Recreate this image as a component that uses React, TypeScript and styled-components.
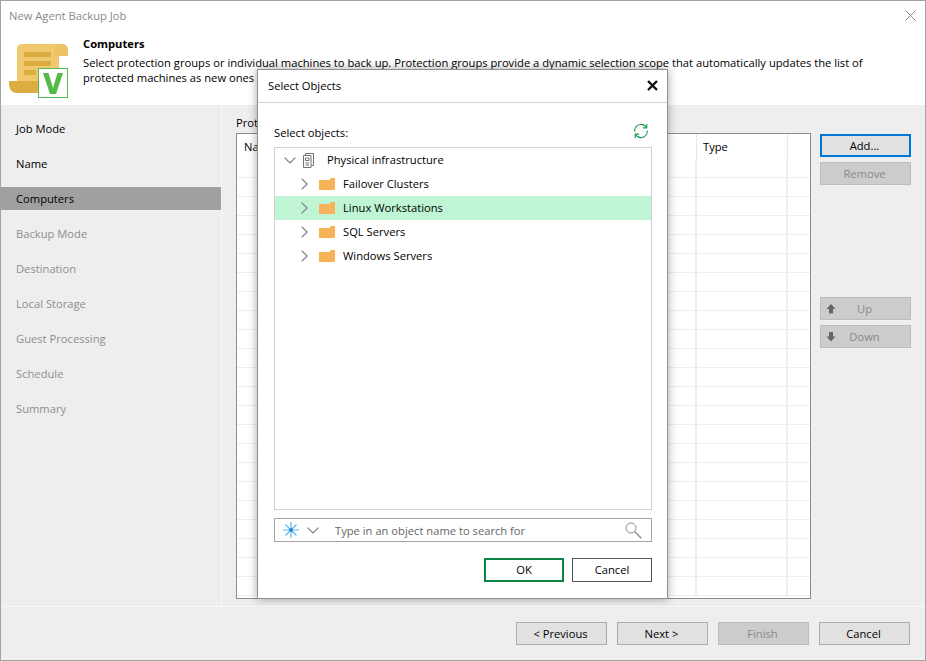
import styled, { createGlobalStyle } from 'styled-components';

const Global = createGlobalStyle`
  html, body { margin: 0; padding: 0; background: #fff; }
  body {
    font-family: "Open Sans", "Noto Sans", "Liberation Sans", sans-serif;
    font-size: 11.2px;
    color: #000;
  }
`;

const Wizard = styled.div`
  position: relative;
  box-sizing: border-box;
  width: 926px;
  height: 661px;
  border: 1px solid #a3a3a3;
  display: flex;
  flex-direction: column;
  overflow: hidden;
`;

const TitleBar = styled.div`
  height: 30px;
  flex: none;
  box-sizing: border-box;
  display: flex;
  align-items: center;
  justify-content: space-between;
  padding: 0 9px 2px 8px;
  color: #8a8a8a;
  background: #fff;
`;

const Header = styled.div`
  height: 74px;
  flex: none;
  display: flex;
  background: #fff;
  padding-left: 7px;
`;

const Logo = styled.svg`
  width: 61px;
  height: 56px;
  margin-top: 12px;
  flex: none;
`;

const HeaderText = styled.div`
  margin-left: 14px;
  padding-top: 5px;
  width: 800px;
  line-height: 15px;
`;

const HeaderTitle = styled.div`
  font-weight: 700;
  margin-bottom: 4px;
`;

const Body = styled.div`
  flex: 1;
  display: flex;
  min-height: 0;
`;

const Sidebar = styled.nav`
  width: 220px;
  flex: none;
  background: #eee;
  border-right: 1px solid #f7f7f7;
  display: flex;
  flex-direction: column;
  gap: 12px;
  padding-top: 12px;
`;

const Step = styled.div<{ $active?: boolean; $muted?: boolean }>`
  height: 23px;
  line-height: 23px;
  padding-left: 15px;
  background: ${({ $active }) => ($active ? '#a0a0a0' : 'transparent')};
  color: ${({ $muted }) => ($muted ? '#8f8f8f' : '#000')};
`;

const Main = styled.div`
  flex: 1;
  background: #eee;
  display: flex;
  padding: 10px 15px 7px 14px;
  gap: 9px;
  min-width: 0;
`;

const ListColumn = styled.div`
  width: 575px;
  flex: none;
  display: flex;
  flex-direction: column;
`;

const ListLabel = styled.div`
  height: 18px;
  line-height: 15px;
`;

const Table = styled.div`
  flex: 1;
  background: #fff;
  border: 1px solid #8c8c8c;
  overflow: hidden;
  display: flex;
  flex-direction: column;
`;

const TableHead = styled.div`
  display: grid;
  grid-template-columns: 460px 91px 1fr;
  height: 25px;
  flex: none;
`;

const HeadCell = styled.div`
  padding: 5px 0 0 6px;
  border-right: 1px solid #e8e8e8;
  &:first-child { padding-left: 7px; }
  &:last-child { border-right: none; }
`;

const TableRow = styled.div`
  display: grid;
  grid-template-columns: 460px 91px 1fr;
  height: 19px;
  flex: none;
  box-sizing: border-box;
  border-bottom: 1px solid #eeeeee;
`;

const RowCell = styled.div`
  border-right: 2px solid #eef0f7;
  &:last-child { border-right: none; }
`;

const SideButtons = styled.div`
  flex: 1;
  display: flex;
  flex-direction: column;
  padding-top: 19px;
`;

const Button = styled.div<{ $variant?: 'focus' | 'off' }>`
  position: relative;
  box-sizing: border-box;
  width: 91px;
  height: 23px;
  padding: 0 2px 1px 0;
  display: flex;
  align-items: center;
  justify-content: center;
  background: ${({ $variant }) => ($variant === 'off' ? '#cccccc' : '#e1e1e1')};
  color: ${({ $variant }) => ($variant === 'off' ? '#8a8a8a' : '#000')};
  border: ${({ $variant }) =>
    $variant === 'focus' ? '2px solid #0078d7' : `1px solid ${$variant === 'off' ? '#bdbdbd' : '#adadad'}`};
`;

const AddButton = styled(Button)`
  margin-bottom: 5px;
`;

const MoveGroup = styled.div`
  margin-top: 112px;
  display: flex;
  flex-direction: column;
  gap: 5px;
`;

const MoveArrow = styled.svg`
  position: absolute;
  left: 5px;
  top: 5px;
  width: 10px;
  height: 11px;
`;

const Footer = styled.div`
  height: 54px;
  flex: none;
  box-sizing: border-box;
  background: #eee;
  border-top: 1px solid #f8f8f8;
  display: flex;
  justify-content: flex-end;
  align-items: flex-start;
  gap: 10px;
  padding: 15px 15px 0 0;
`;

const Dialog = styled.div`
  position: absolute;
  left: 256px;
  top: 68px;
  box-sizing: border-box;
  width: 411px;
  height: 530px;
  background: #fff;
  border: 1px solid #8f8f8f;
  box-shadow: 0 0 9px rgba(0, 0, 0, 0.35);
  display: flex;
  flex-direction: column;
`;

const DialogTitle = styled.div`
  height: 33px;
  flex: none;
  box-sizing: border-box;
  padding: 0 9px 1px 10px;
  border-bottom: 1px solid #d4d4d4;
  display: flex;
  align-items: center;
  justify-content: space-between;
`;

const DialogBody = styled.div`
  flex: 1;
  display: flex;
  flex-direction: column;
  padding: 0 15px 16px 16px;
  min-height: 0;
`;

const ObjectsHead = styled.div`
  height: 44px;
  flex: none;
  display: flex;
  align-items: flex-end;
  justify-content: space-between;
  padding: 0 3px 7px 0;
  box-sizing: border-box;
`;

const Tree = styled.div`
  flex: 1;
  border: 1px solid #d0d0d0;
  min-height: 0;
`;

const TreeRow = styled.div<{ $selected?: boolean; $child?: boolean }>`
  height: 24px;
  display: flex;
  align-items: center;
  background: ${({ $selected }) => ($selected ? '#bff5d5' : 'transparent')};
  padding-left: ${({ $child }) => ($child ? '26px' : '9px')};
`;

const TreeLabel = styled.span<{ $root?: boolean }>`
  margin-left: ${({ $root }) => ($root ? '13px' : '8px')};
  margin-bottom: 1px;
`;

const ToggleDown = styled.span`
  display: flex;
  margin-right: 7px;
`;

const ToggleRight = styled.svg`
  flex: none;
  margin-right: 11px;
`;

const SearchBox = styled.div`
  height: 24px;
  flex: none;
  box-sizing: border-box;
  margin-top: 8px;
  border: 1px solid #a5a5a5;
  display: flex;
  align-items: center;
  padding: 0 9px 0 8px;
  color: #666;
`;

const ScopeCaret = styled.span`
  display: flex;
  margin-left: 8px;
`;

const SearchHint = styled.span`
  flex: 1;
  margin-left: 16px;
`;

const DialogActions = styled.div`
  margin-top: 16px;
  flex: none;
  display: flex;
  justify-content: flex-end;
  gap: 8px;
`;

const DialogButton = styled.div<{ $primary?: boolean }>`
  box-sizing: border-box;
  width: 80px;
  height: 24px;
  padding-bottom: 1px;
  display: flex;
  align-items: center;
  justify-content: center;
  background: #fff;
  border: ${({ $primary }) => ($primary ? '2px solid #0c8443' : '1px solid #555')};
`;

const FixedIcon = styled.svg`
  flex: none;
`;

const Refresh = styled.svg`
  flex: none;
  margin-bottom: 1px;
`;

const steps = [
  { name: 'Job Mode' },
  { name: 'Name' },
  { name: 'Computers', active: true },
  { name: 'Backup Mode', muted: true },
  { name: 'Destination', muted: true },
  { name: 'Local Storage', muted: true },
  { name: 'Guest Processing', muted: true },
  { name: 'Schedule', muted: true },
  { name: 'Summary', muted: true },
];

const folders = ['Failover Clusters', 'Linux Workstations', 'SQL Servers', 'Windows Servers'];
const rows = Array.from({ length: 23 }, (_, i) => i);

const ScrollLogo = () => (
  <Logo viewBox="0 0 61 56">
    <path d="M9 6q0-5 5-5h40q6 0 6 7v5h-9v27H9z" fill="#f0c96f" />
    <path d="M50 1q-4 1-4 7v5h14V8q0-7-6-7z" fill="#eec262" />
    <path d="M1 38h36v12H9q-7 0-8-8z" fill="#dcae42" />
    <path d="M16 9h27v5H16zM16 18h27v5H16zM16 27h12v5H16z" fill="#dcae42" />
    <rect x="30.5" y="25.5" width="29" height="29" fill="#fff" stroke="#55bb55" />
    <path d="M35 30h5.500l4.500 15 4.500-15H55l-7 21h-6z" fill="#54b948" />
  </Logo>
);

const CloseThin = () => (
  <FixedIcon width="11" height="11" viewBox="0 0 11 11">
    <path d="M.5.5l10 10M10.500.5l-10 10" stroke="#8a8a8a" fill="none" />
  </FixedIcon>
);

const CloseBold = () => (
  <FixedIcon width="11" height="11" viewBox="0 0 11 11">
    <path d="M1 1l9 9M10 1l-9 9" stroke="#111" strokeWidth="2.4" fill="none" />
  </FixedIcon>
);

const RefreshIcon = () => (
  <Refresh width="16" height="16" viewBox="0 0 16 16" fill="none" stroke="#189a50" strokeWidth="1.1">
    <path d="M2.200 5.400A6.200 6.200 0 0 1 13.400 4.600" />
    <path d="M13.800 .9v4h-4" />
    <path d="M13.800 10.600A6.200 6.200 0 0 1 2.600 11.400" />
    <path d="M2.200 15.100v-4h4" />
    <path d="M1.600 8.400c0-1 .2-2 .6-3M14.400 7.600c0 1-.2 2-.6 3" />
  </Refresh>
);

const ChevronDown = () => (
  <FixedIcon width="12" height="7" viewBox="0 0 12 7" fill="none" stroke="#7a7f85" strokeWidth="1.2">
    <path d="M.6.6L6 6l5.400-5.400" />
  </FixedIcon>
);

const ChevronRight = () => (
  <ToggleRight width="7" height="12" viewBox="0 0 7 12" fill="none" stroke="#7a7f85" strokeWidth="1.2">
    <path d="M.6.6L6.200 6 .6 11.400" />
  </ToggleRight>
);

const ServerIcon = () => (
  <FixedIcon width="11" height="15" viewBox="0 0 11 15" fill="none" stroke="#70757a">
    <path d="M.5 2.500h7.500v12H.5zM2.500 2.500v-2h8v12H8" />
    <path d="M2.500 5h3.500v2.500h-3.500zM2.500 10h3.500M2.500 12h3.500" />
  </FixedIcon>
);

const FolderIcon = () => (
  <FixedIcon width="16" height="12" viewBox="0 0 16 12">
    <path d="M0 2h10l2-2h4v12H0z" fill="#f8b25a" />
  </FixedIcon>
);

const SnowIcon = () => (
  <FixedIcon width="16" height="16" viewBox="0 0 16 16" fill="none" stroke="#5cb6ee" strokeWidth="1.2">
    <path d="M0 8h16M8 0v16M2.500 2.500l11 11M13.500 2.500l-11 11" />
    <rect x="6.500" y="6.500" width="3" height="3" fill="#1b7fc8" stroke="none" />
  </FixedIcon>
);

const SearchIcon = () => (
  <FixedIcon width="17" height="17" viewBox="0 0 17 17" fill="none" stroke="#8f8f8f">
    <circle cx="6" cy="6" r="5" />
    <path d="M9.800 9.800l6.500 6.500" strokeWidth="1.500" />
  </FixedIcon>
);

const ArrowUp = () => (
  <MoveArrow viewBox="0 0 10 11">
    <path d="M5 1l4.500 5H7v4.500H3V6H.5z" fill="#666" />
  </MoveArrow>
);

const ArrowDown = () => (
  <MoveArrow viewBox="0 0 10 11">
    <path d="M5 10.500L.5 5.500H3V1h4v4.500h2.500z" fill="#666" />
  </MoveArrow>
);

export default function App() {
  return (
    <>
      <Global />
      <Wizard>
        <TitleBar>
          New Agent Backup Job
          <CloseThin />
        </TitleBar>
        <Header>
          <ScrollLogo />
          <HeaderText>
            <HeaderTitle>Computers</HeaderTitle>
            Select protection groups or individual machines to back up. Protection groups provide a dynamic selection
            scope that automatically updates the list of protected machines as new ones appear in the group.
          </HeaderText>
        </Header>
        <Body>
          <Sidebar>
            {steps.map((s) => (
              <Step key={s.name} $active={s.active} $muted={s.muted}>
                {s.name}
              </Step>
            ))}
          </Sidebar>
          <Main>
            <ListColumn>
              <ListLabel>Prot</ListLabel>
              <Table>
                <TableHead>
                  <HeadCell>Na</HeadCell>
                  <HeadCell>Type</HeadCell>
                  <HeadCell />
                </TableHead>
                {rows.map((r) => (
                  <TableRow key={r}>
                    <RowCell />
                    <RowCell />
                    <RowCell />
                  </TableRow>
                ))}
              </Table>
            </ListColumn>
            <SideButtons>
              <AddButton $variant="focus">Add...</AddButton>
              <Button $variant="off">Remove</Button>
              <MoveGroup>
                <Button $variant="off">
                  <ArrowUp />
                  Up
                </Button>
                <Button $variant="off">
                  <ArrowDown />
                  Down
                </Button>
              </MoveGroup>
            </SideButtons>
          </Main>
        </Body>
        <Footer>
          <Button>&lt; Previous</Button>
          <Button>Next &gt;</Button>
          <Button $variant="off">Finish</Button>
          <Button>Cancel</Button>
        </Footer>
        <Dialog>
          <DialogTitle>
            Select Objects
            <CloseBold />
          </DialogTitle>
          <DialogBody>
            <ObjectsHead>
              Select objects:
              <RefreshIcon />
            </ObjectsHead>
            <Tree>
              <TreeRow>
                <ToggleDown>
                  <ChevronDown />
                </ToggleDown>
                <ServerIcon />
                <TreeLabel $root>Physical infrastructure</TreeLabel>
              </TreeRow>
              {folders.map((f) => (
                <TreeRow key={f} $child $selected={f === 'Linux Workstations'}>
                  <ChevronRight />
                  <FolderIcon />
                  <TreeLabel>{f}</TreeLabel>
                </TreeRow>
              ))}
            </Tree>
            <SearchBox>
              <SnowIcon />
              <ScopeCaret>
                <ChevronDown />
              </ScopeCaret>
              <SearchHint>Type in an object name to search for</SearchHint>
              <SearchIcon />
            </SearchBox>
            <DialogActions>
              <DialogButton $primary>OK</DialogButton>
              <DialogButton>Cancel</DialogButton>
            </DialogActions>
          </DialogBody>
        </Dialog>
      </Wizard>
    </>
  );
}
